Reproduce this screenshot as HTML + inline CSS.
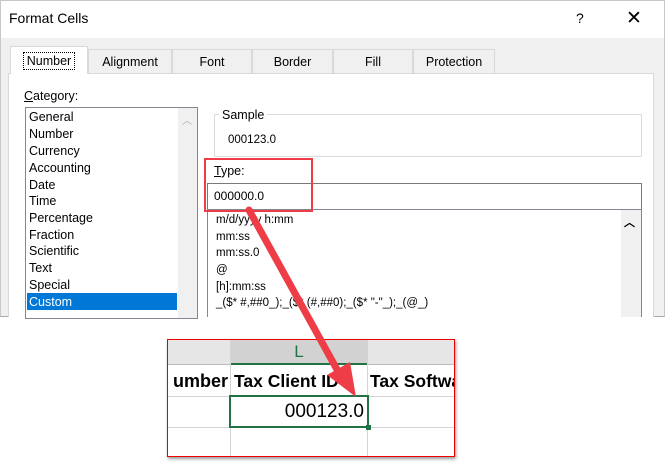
<!DOCTYPE html>
<html><head><style>
*{margin:0;padding:0;box-sizing:border-box}
body{width:665px;height:467px;background:#fff;position:relative;overflow:hidden;font-family:"Liberation Sans",sans-serif;font-size:12px;color:#000}
.a{position:absolute}
.tab{position:absolute;top:49px;height:24px;border:1px solid #d9d9d9;border-bottom:none;background:#f0f0f0;text-align:center;line-height:24px;font-size:12.5px}
.li{position:absolute;left:29px;font-size:12.5px}
.ti{position:absolute;left:216px;font-size:11.5px}
</style></head><body>
<div class="a" style="left:0;top:0;width:665px;height:317px;background:#f0f0f0;border:1px solid #c8c8c8;border-bottom:1px solid #aaa"></div>
<div class="a" style="left:1px;top:1px;width:663px;height:37px;background:#fff"></div>
<div class="a" style="left:9px;top:10px;font-size:14px">Format Cells</div>
<div class="a" style="left:576px;top:10px;font-size:14px">?</div>
<div class="a" style="left:626px;top:7px;font-size:19px;font-weight:300">✕</div>
<div class="a" style="left:8px;top:73px;width:646px;height:244px;background:#fff;border:1px solid #d9d9d9;border-bottom:none"></div>
<div class="tab" style="left:10px;top:46px;width:78px;height:28px;background:#fff;line-height:28px"><span style="border:1px dotted #000;padding:1px 3px">Number</span></div>
<div class="tab" style="left:88px;width:84px">Alignment</div>
<div class="tab" style="left:172px;width:80px">Font</div>
<div class="tab" style="left:252px;width:81px">Border</div>
<div class="tab" style="left:333px;width:80px">Fill</div>
<div class="tab" style="left:413px;width:82px">Protection</div>
<div class="a" style="left:24px;top:89px;font-size:12.5px"><u>C</u>ategory:</div>
<div class="a" style="left:25px;top:107px;width:173px;height:212px;border:1px solid #828790;background:#fff"></div>
<div class="a" style="left:178px;top:108px;width:19px;height:210px;background:#f0f0f0"></div>
<div class="a" style="left:182px;top:112px;color:#aaa;font-size:10px">︿</div>
<div class="li" style="top:110px">General</div>
<div class="li" style="top:127px">Number</div>
<div class="li" style="top:144px">Currency</div>
<div class="li" style="top:161px">Accounting</div>
<div class="li" style="top:178px">Date</div>
<div class="li" style="top:194px">Time</div>
<div class="li" style="top:211px">Percentage</div>
<div class="li" style="top:228px">Fraction</div>
<div class="li" style="top:244px">Scientific</div>
<div class="li" style="top:261px">Text</div>
<div class="li" style="top:278px">Special</div>
<div class="a" style="left:27px;top:293px;width:150px;height:17px;background:#0078d7"></div>
<div class="li" style="top:295px;color:#fff">Custom</div>
<div class="a" style="left:214px;top:114px;width:428px;height:43px;border:1px solid #dcdcdc"></div>
<div class="a" style="left:219px;top:108px;background:#fff;padding:0 3px;font-size:12.5px">Sample</div>
<div class="a" style="left:228px;top:134px;font-size:11.5px">000123.0</div>
<div class="a" style="left:214px;top:164px;font-size:12.5px"><u>T</u>ype:</div>
<div class="a" style="left:207px;top:183px;width:435px;height:27px;border:1px solid #7a7a7a"></div>
<div class="a" style="left:214px;top:189px;font-size:12px">000000.0</div>
<div class="a" style="left:207px;top:209px;width:435px;height:108px;border:1px solid #828790;border-bottom:none"></div>
<div class="a" style="left:621px;top:210px;width:20px;height:107px;background:#f0f0f0"></div>
<div class="a" style="left:624px;top:214px;font-size:11px;font-weight:bold">︿</div>
<div class="ti" style="top:214px">m/d/yyyy h:mm</div>
<div class="ti" style="top:231px">mm:ss</div>
<div class="ti" style="top:247px">mm:ss.0</div>
<div class="ti" style="top:264px">@</div>
<div class="ti" style="top:281px">[h]:mm:ss</div>
<div class="ti" style="top:297px">_($* #,##0_);_($* (#,##0);_($* "-"_);_(@_)</div>
<div class="a" style="left:204px;top:158px;width:109px;height:54px;border:2px solid #ee3d47"></div>
<!-- excel -->
<div class="a" style="left:167px;top:339px;width:288px;height:118px;border:1px solid #e00;background:#fff;box-shadow:1px 2px 3px #999"></div>
<div class="a" style="left:168px;top:340px;width:286px;height:25px;background:#e6e6e6;border-bottom:1px solid #bbb"></div>
<div class="a" style="left:230px;top:340px;width:138px;height:25px;background:#d2d2d2;border-bottom:2px solid #217346;color:#217346;text-align:center;font-size:17px;line-height:24px">L</div>
<div class="a" style="left:230px;top:340px;width:1px;height:116px;background:#d4d4d4"></div>
<div class="a" style="left:367px;top:340px;width:1px;height:116px;background:#d4d4d4"></div>
<div class="a" style="left:168px;top:396px;width:286px;height:1px;background:#d4d4d4"></div>
<div class="a" style="left:168px;top:427px;width:286px;height:1px;background:#d4d4d4"></div>
<div class="a" style="left:168px;top:366px;width:62px;height:30px;overflow:hidden;font-weight:bold;font-size:18px;line-height:30px"><span style="position:absolute;right:2px;white-space:nowrap">umber</span></div>
<div class="a" style="left:234px;top:366px;font-weight:bold;font-size:17.5px;line-height:30px;white-space:nowrap">Tax Client ID</div>
<div class="a" style="left:370px;top:366px;width:84px;overflow:hidden;font-weight:bold;font-size:17.5px;line-height:30px;white-space:nowrap">Tax Software</div>
<div class="a" style="left:229px;top:395px;width:140px;height:33px;border:2px solid #217346"></div>
<div class="a" style="left:366px;top:425px;width:5px;height:5px;background:#217346"></div>
<div class="a" style="left:232px;top:397px;width:132px;text-align:right;font-size:19px;line-height:29px">000123.0</div>
<svg class="a" style="left:0;top:0" width="665" height="467"><line x1="249" y1="210" x2="340" y2="375" stroke="#ee3d47" stroke-width="7" stroke-linecap="round"/><polygon points="356,397 327,375 350,362" fill="#ee3d47"/></svg>
</body></html>
